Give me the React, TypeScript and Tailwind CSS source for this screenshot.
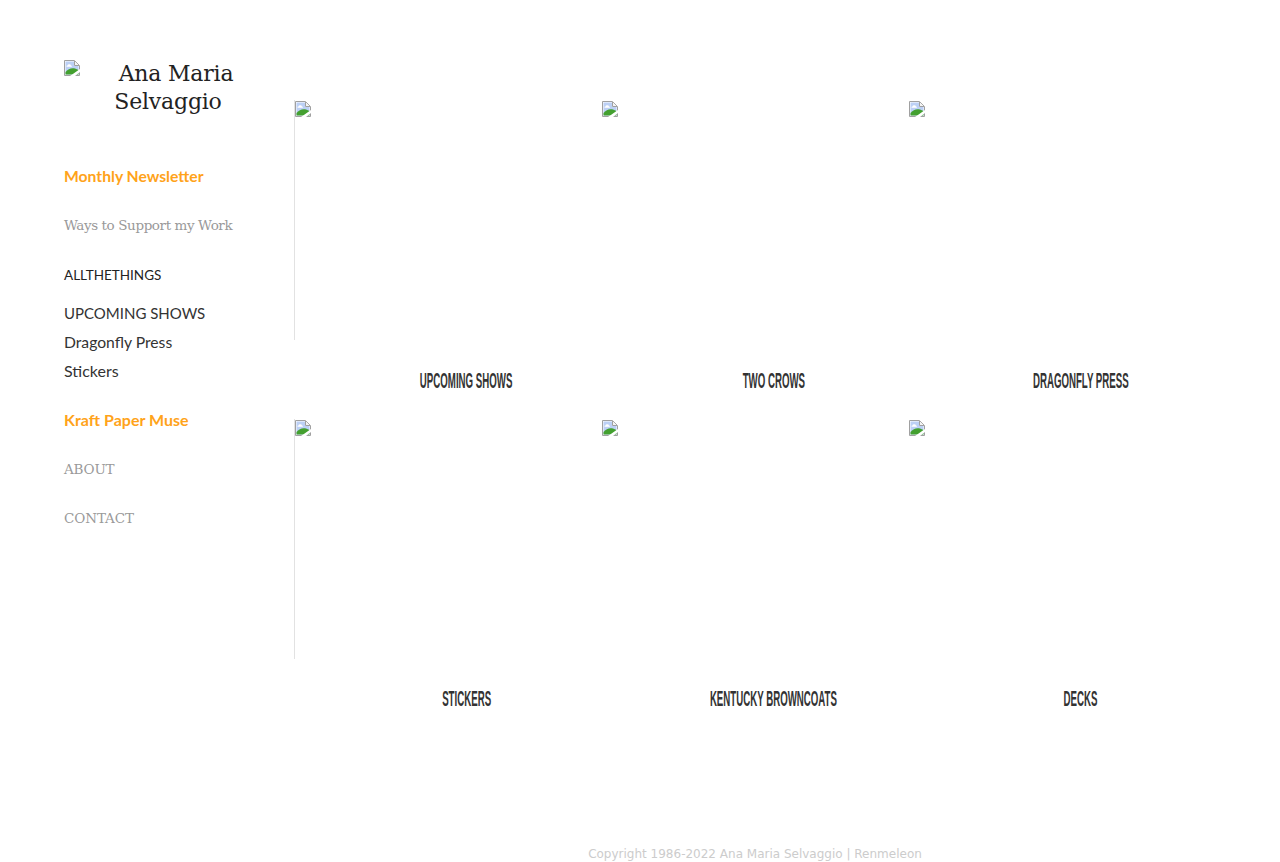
import React from 'react';

const BrokenImage: React.FC<{ className?: string }> = ({ className }) => (
  <svg width="16" height="16" viewBox="0 0 16 16" className={className ?? 'block'}>
    <path d="M0.5 0.5H10.5L15.5 5.5V15.5H0.5Z" fill="#fff" stroke="#a0a0a0" />
    <path d="M1.5 1.5H10V6H14.5V14.5H1.5Z" fill="#bcd0f5" />
    <path d="M10.5 1V5.5H15" fill="#f4f4f4" stroke="#a0a0a0" />
    <path d="M3.5 5.5a1.7 1.2 0 0 1 3.4 0a1 1 0 0 1 1 1.2H2.5a1 1 0 0 1 1-1.2Z" fill="#fff" />
    <path d="M1.5 14.5V12C4 8.5 8 7.5 11 8.5L14.5 10V14.5Z" fill="#43a02f" />
    <path d="M6 16L16 9V12L11 16Z" fill="#fff" />
  </svg>
);

const tiles = [
  'UPCOMING SHOWS',
  'TWO CROWS',
  'DRAGONFLY PRESS',
  'STICKERS',
  'KENTUCKY BROWNCOATS',
  'DECKS',
];

const slab = "font-['DejaVu_Serif',serif]";
const proxima = "font-['Lato',sans-serif]";

const App: React.FC = () => {
  return (
    <div className="relative h-[862px] w-full overflow-hidden bg-white">
      <div className="flex">
        <aside className="w-[294px] shrink-0 pl-16 pt-[60px]">
          <div className={`${slab} w-[208px] text-center text-[22px] leading-[28px] tracking-[-0.2px] text-[#222]`}>
            <BrokenImage className="float-left" />
            Ana Maria Selvaggio
          </div>

          <nav className="mt-[46px] flex flex-col items-start">
            <a className={`${proxima} h-[29px] text-[15.7px] font-bold leading-[29px] text-[#ffa31a]`}>Monthly Newsletter</a>
            <a className={`${slab} mt-5 text-[13.5px] leading-[29px] tracking-[-0.4px] text-[#999]`}>Ways to Support my Work</a>
            <div className={`${proxima} mt-5 h-[29px] text-[13.5px] leading-[31px] text-[#222]`}>ALLTHETHINGS</div>
            <a className={`${proxima} mt-[10px] h-[29px] text-[15px] leading-[29px] text-[#333]`}>UPCOMING SHOWS</a>
            <a className={`${proxima} h-[29px] text-[15.7px] leading-[29px] text-[#333]`}>Dragonfly Press</a>
            <a className={`${proxima} h-[29px] text-[16px] leading-[27px] text-[#333]`}>Stickers</a>
            <a className={`${proxima} mt-5 h-[29px] text-[16px] font-bold leading-[27px] text-[#ffa31a]`}>Kraft Paper Muse</a>
            <a className={`${slab} mt-5 text-[13.5px] leading-[29px] tracking-[-0.2px] text-[#999]`}>ABOUT</a>
            <a className={`${slab} mt-5 text-[13.5px] leading-[29px] tracking-[-0.1px] text-[#999]`}>CONTACT</a>
          </nav>
        </aside>

        <main className="grid flex-1 grid-cols-[307px_307px_307px] content-start pt-[100px]">
          {tiles.map((title, i) => (
            <div key={title} className="h-[319px]">
              <div className={`h-[240px] pt-px ${i % 3 === 0 ? 'border-l border-[#e2e2e2]' : 'pl-px'}`}>
                <BrokenImage />
              </div>
              <div className={`flex justify-center pl-[38px] ${i < 3 ? 'mt-[29px]' : 'mt-7'}`}>
                <span className="inline-block origin-center scale-x-[0.44] whitespace-nowrap font-['Liberation_Sans',sans-serif] text-[22px] font-bold leading-6 text-[#333]">
                  {title}
                </span>
              </div>
            </div>
          ))}
        </main>
      </div>

      <div className="absolute bottom-0 left-[230px] right-0 text-center font-['DejaVu_Sans',sans-serif] text-[12px] leading-4 text-[#ccc]">
        Copyright 1986-2022 Ana Maria Selvaggio | Renmeleon
      </div>
    </div>
  );
};

export default App;
